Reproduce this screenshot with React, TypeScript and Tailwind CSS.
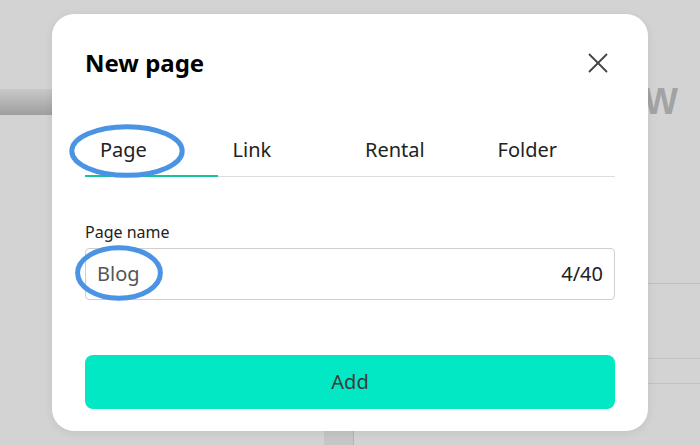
import { X } from 'lucide-react'

const TABS = ['Page', 'Link', 'Rental', 'Folder']

function Ring({ className }: { className: string }) {
  return (
    <svg className={`pointer-events-none absolute ${className}`} viewBox="0 0 100 50" preserveAspectRatio="none">
      <ellipse
        cx="50"
        cy="25"
        rx="46"
        ry="21"
        fill="none"
        stroke="#4a94e3"
        strokeWidth="5"
        vectorEffect="non-scaling-stroke"
      />
    </svg>
  )
}

function Backdrop() {
  return (
    <div className="absolute inset-0 overflow-hidden bg-[#d3d3d3]">
      <div className="mt-[89px] flex h-[26px]">
        <div className="w-[60px] bg-gradient-to-b from-[#c9c9c9] to-[#9f9f9f]" />
        <div className="flex-1" />
        <div className="w-[56px] text-[36px] leading-[26px] font-black text-[#a3a3a3] [font-family:'Liberation_Sans',sans-serif]">
          W
        </div>
      </div>
      <div className="ml-auto mt-[168px] w-[60px] border-t border-[#bdbdbd]" />
      <div className="ml-auto mt-[74px] w-[60px] border-t border-[#c2c2c2]" />
      <div className="ml-auto mt-[24px] w-[60px] border-t border-[#c2c2c2]" />
      <div className="absolute bottom-0 left-[324px] h-[16px] w-[30px] bg-[#c6c6c6]" />
      <div className="absolute bottom-0 left-[353px] h-[16px] w-px bg-[#b5b5b5]" />
    </div>
  )
}

export default function App() {
  return (
    <div className="relative h-[445px] w-[700px] overflow-hidden [font-family:'Noto_Sans',sans-serif]">
      <Backdrop />

      <div className="absolute left-[52px] top-[14px] flex h-[417px] w-[596px] flex-col rounded-[22px] bg-white px-[33px] pt-[32px] shadow-[0_2px_10px_rgba(0,0,0,0.08)]">
        <div className="flex items-center justify-between">
          <h2 className="text-[24px] font-bold leading-[32px] text-black">New page</h2>
          <button className="text-[#444]">
            <X size={34} strokeWidth={1.3} />
          </button>
        </div>

        <div className="relative mt-[56px] flex border-b border-[#dedede]">
          {TABS.map((tab, i) => (
            <div
              key={tab}
              className={`-mb-px w-[133px] pb-[11px] pl-[15px] text-[20px] leading-[28px] text-[#222] ${
                i === 0 ? 'border-b-2 border-[#17c39c]' : ''
              }`}
            >
              {tab}
            </div>
          ))}
          <Ring className="-left-[18px] -top-[14px] h-[58px] w-[120px]" />
        </div>

        <label className="mt-[44px] text-[16px] leading-[22px] text-[#222]">Page name</label>
        <div className="relative mt-[5px] flex h-[52px] items-center justify-between rounded-[4px] border border-[#cfcfcf] px-[11px]">
          <span className="text-[20px] text-[#555]">Blog</span>
          <span className="text-[20px] text-[#222]">4/40</span>
          <Ring className="-left-[12px] -top-[6px] h-[60px] w-[90px]" />
        </div>

        <button className="mt-[55px] h-[54px] rounded-[8px] bg-[#02e8c5] text-[20px] text-[#3a3a3a]">
          Add
        </button>
      </div>
    </div>
  )
}
